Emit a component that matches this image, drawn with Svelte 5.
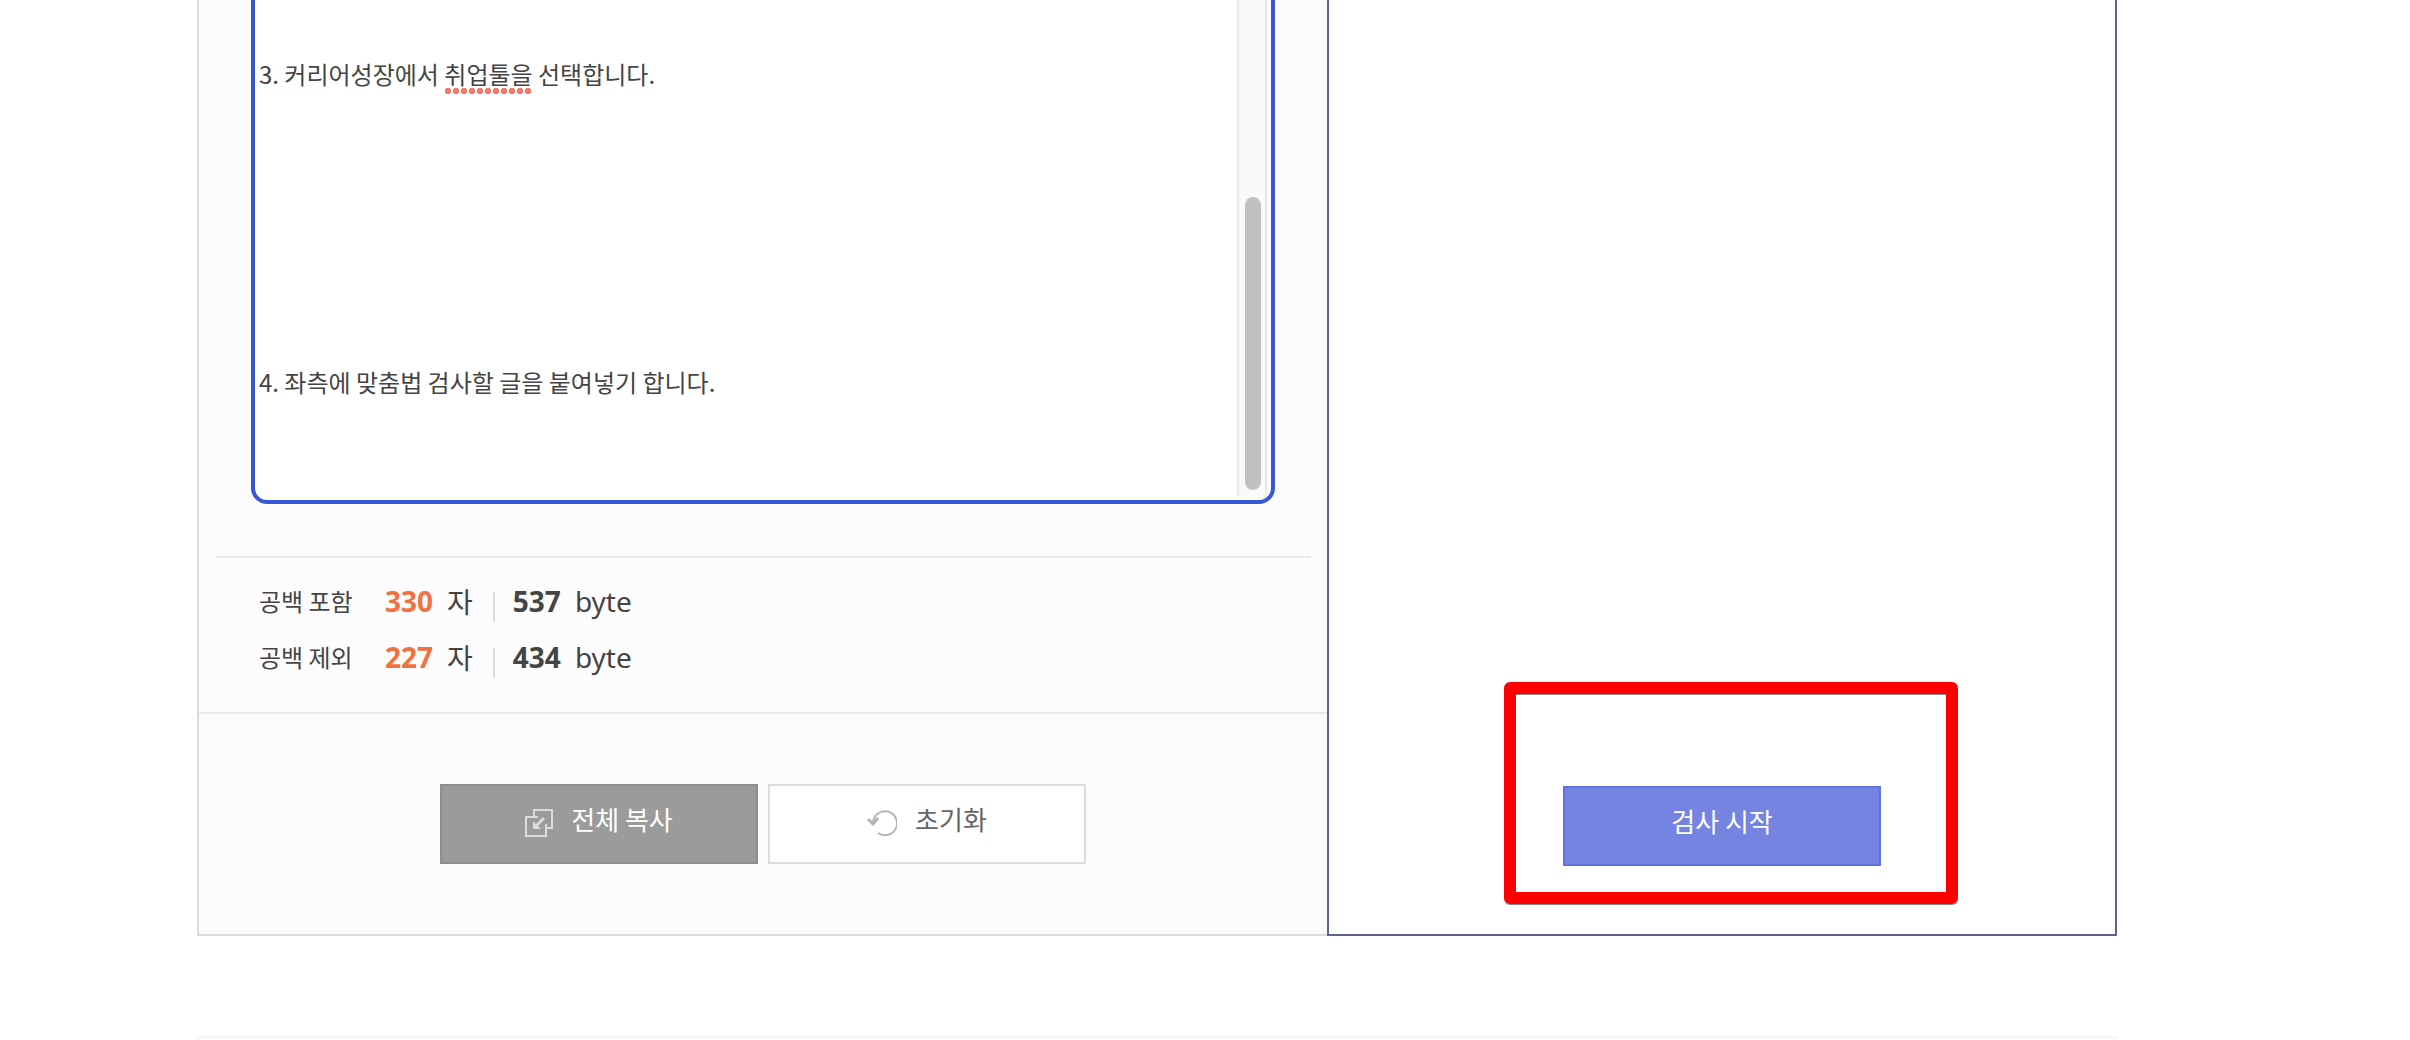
<script>
  const blank = "\n".repeat(7)

  let draft = $state("\n3. 커리어성장에서 취업툴을 선택합니다." + blank + "4. 좌측에 맞춤법 검사할 글을 붙여넣기 합니다.\n")
  let hasTypo = $derived(draft.includes("취업툴을"))

  let counts = [
    { label: "공백 포함", chars: 330, bytes: 537 },
    { label: "공백 제외", chars: 227, bytes: 434 },
  ]

  function copyAll() {
    navigator.clipboard?.writeText(draft)
  }

  function reset() {
    draft = ""
  }
</script>

<main>
  <div class="checker">
    <section class="write">
      <div class="editor">
        <div class="field">
          <textarea rows="11" spellcheck="false" aria-label="맞춤법 검사할 글" bind:value={draft}></textarea>
          {#if hasTypo}
            <div class="typo"></div>
          {/if}
        </div>
        <div class="scrollbar"><div class="thumb"></div></div>
      </div>

      <dl class="counts">
        {#each counts as count}
          <div class="row">
            <dt>{count.label}</dt>
            <dd class="chars"><strong>{count.chars}</strong> <span>자</span></dd>
            <dd class="bytes"><strong>{count.bytes}</strong> <span>byte</span></dd>
          </div>
        {/each}
      </dl>

      <div class="actions">
        <button class="copy" onclick={copyAll}>
          <svg width="28" height="28" viewBox="0 0 28 28" fill="none" stroke="#dcdcdc" stroke-width="2">
            <path d="M9 7V1h18v18h-5" />
            <path d="M13 8H1v19h20V15" />
            <path d="M19 9l-9 9" stroke-width="3" />
            <path d="M8 12v8h8z" fill="#dcdcdc" stroke="none" />
          </svg>
          전체 복사
        </button>
        <button class="reset" onclick={reset}>
          <svg width="30" height="28" viewBox="0 0 30 28" fill="none" stroke="#b4b4b4" stroke-width="2">
            <path d="M6 14a12 12 0 1 1 5 10" />
            <path d="M1 10l5 5 5-6" stroke-width="3" />
          </svg>
          초기화
        </button>
      </div>
    </section>

    <section class="result">
      <div class="start-wrap">
        <button class="start">검사 시작</button>
        <div class="highlight"></div>
      </div>
    </section>
  </div>

  <div class="notice"></div>
</main>

<style>
  :global(body) {
    background: #fff;
  }

  main {
    padding: 0 293px 0 197px;
    font-family: "Noto Sans", "Noto Sans CJK KR", sans-serif;
    color: #444;
  }

  .checker {
    display: grid;
    grid-template-columns: 113fr 79fr;
  }

  .write {
    border-left: 2px solid #dcdcdc;
    border-bottom: 2px solid #dcdcdc;
    background: #fcfcfc;
  }

  .editor {
    display: flex;
    margin: 0 52px 52px;
    border: 4px solid #3857d6;
    border-top: 0;
    border-radius: 0 0 16px 16px;
    background: #fff;
  }

  .field {
    position: relative;
    flex: 1;
  }

  textarea {
    display: block;
    box-sizing: border-box;
    width: 100%;
    margin: 0;
    padding: 8px 4px;
    border: 0;
    outline: 0;
    background: none;
    color: #444;
    font-family: "Noto Sans CJK KR", sans-serif;
    font-size: 24px;
    line-height: 44px;
    resize: none;
    overflow: hidden;
  }

  /* red dots under the misspelled word */
  .typo {
    position: absolute;
    top: 88px;
    left: 189px;
    width: 88px;
    height: 6px;
    background: radial-gradient(circle, #f4796d 3px, transparent 3px) 0 0 / 8px 6px repeat-x;
    pointer-events: none;
  }

  .scrollbar {
    display: flex;
    align-items: flex-end;
    margin: 0 4px 4px 0;
    padding: 0 4px 6px 6px;
    border: solid #e8e8e8;
    border-width: 0 2px;
    background: #fafafa;
  }

  .thumb {
    width: 16px;
    height: 293px;
    border-radius: 8px;
    background: #c1c1c1;
  }

  .counts {
    margin: 0 16px;
    padding: 16px 44px 26px;
    border-top: 2px solid #eaeaea;
  }

  .row {
    display: flex;
    align-items: center;
    height: 56px;
    font-size: 28px;
  }

  dt {
    width: 126px;
    padding-bottom: 4px;
    font-family: "Noto Sans CJK KR", sans-serif;
    font-size: 24px;
  }

  dd {
    display: flex;
    align-items: center;
    gap: 14px;
    margin: 0;
  }

  dd strong,
  dd span {
    padding-bottom: 2px;
  }

  .chars strong {
    color: #f07142;
  }

  .bytes::before {
    content: "";
    width: 2px;
    height: 30px;
    margin: 10px 4px 0 20px;
    background: #dcdcdc;
  }

  .actions {
    display: flex;
    justify-content: center;
    gap: 10px;
    padding: 70px 0;
    border-top: 2px solid #eaeaea;
    background: #fbfbfb;
  }

  button {
    display: flex;
    align-items: center;
    justify-content: center;
    gap: 18px;
    box-sizing: border-box;
    width: 318px;
    height: 80px;
    padding: 0 0 12px;
    border: 2px solid;
    font-family: "Noto Sans CJK KR", sans-serif;
    font-size: 26px;
    cursor: pointer;
  }

  svg {
    margin-top: 10px;
  }

  .copy {
    border-color: #8e8e8e;
    background: #9b9b9b;
    color: #fff;
  }

  .reset {
    border-color: #dcdcdc;
    background: #fff;
    color: #666;
  }

  .result {
    display: flex;
    align-items: flex-end;
    justify-content: center;
    padding-bottom: 68px;
    border: 2px solid #5f6389;
    border-top: 0;
  }

  .start-wrap {
    position: relative;
  }

  .start {
    border-color: #6272e4;
    background: #7584e0;
    color: #fff;
  }

  .highlight {
    position: absolute;
    inset: -104px -77px -38px -59px;
    border: 12px solid #f00;
    border-radius: 6px;
    box-shadow: 0 1px 0 #888, inset 0 1px 0 #888;
    pointer-events: none;
  }

  .notice {
    height: 2px;
    margin-top: 100px;
    border: 2px solid #f7f7f7;
    border-bottom: 0;
    background: #fcfcfc;
  }
</style>
